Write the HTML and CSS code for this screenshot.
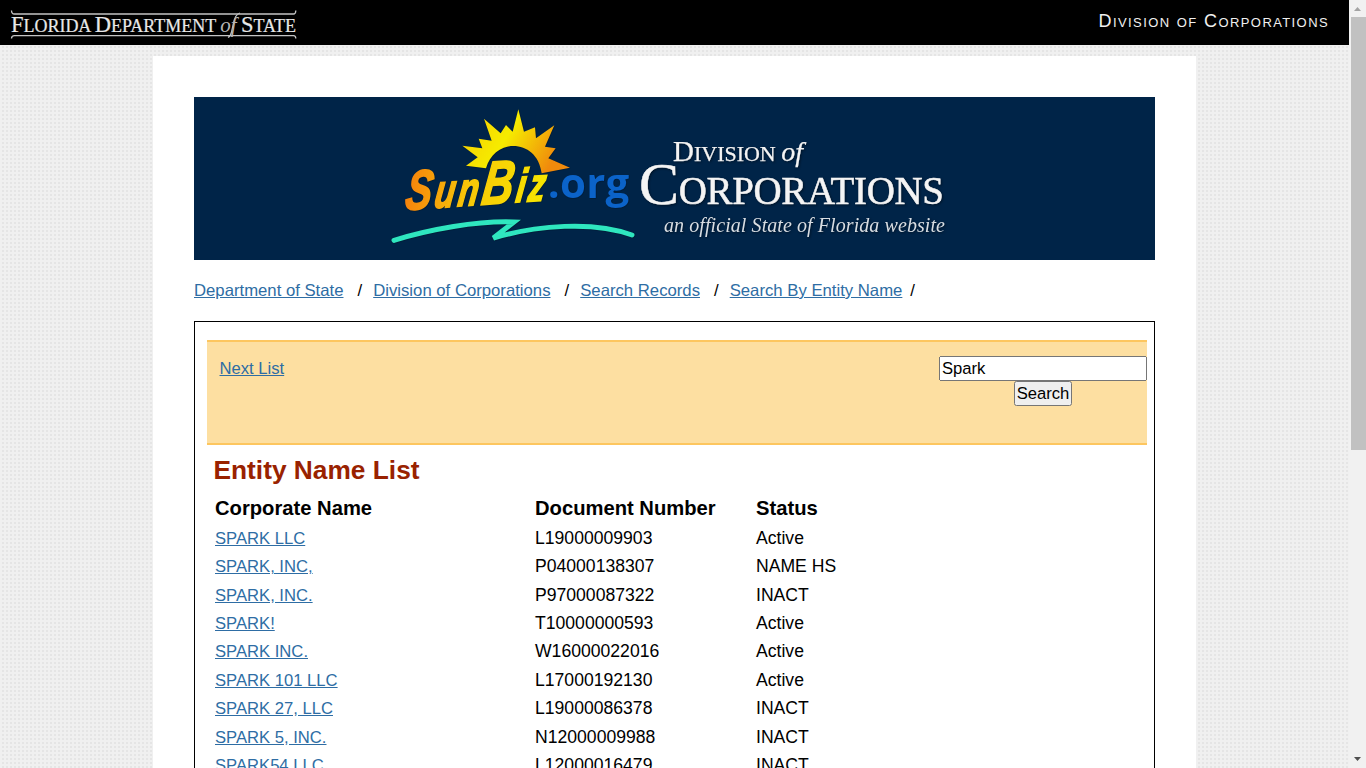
FILE: index.html
```html
<!DOCTYPE html>
<html lang="en">
<head>
<meta charset="utf-8">
<title>Entity Name List</title>
<link rel="stylesheet" href="styles.css">
</head>
<body>
<div class="window">
  <div class="page">
    <header class="topbar">
      <svg class="dos-logo" width="300" height="45" viewBox="0 0 300 45">
        <g class="dos-rule">
          <path d="M11.500 10.500c0 2 1 3.500 3 3.500H293.500c1.500 0 2.300-1.500 2.300-3.500"/>
          <path d="M11.500 38.500c0-1.500 1-2.900 3-2.900H293.500c1.500 0 2.300 1.400 2.300 2.900"/>
        </g>
        <path class="dos-of-flourish" d="M240 13c-4 1-5.500 5-6.500 10l-2 9c-.6 3-1.500 4.500-3.500 5.500"/>
        <text class="dos-text" x="11" y="32" textLength="285"><tspan class="cap">F</tspan>LORIDA <tspan class="cap">D</tspan>EPARTMENT <tspan class="of">of</tspan> <tspan class="cap">S</tspan>TATE</text>
      </svg>
      <div class="division">Division of Corporations</div>
    </header>
    <main class="card">
      <div class="banner">
        <svg width="961" height="163" viewBox="0 0 961 163">
          <defs>
            <linearGradient id="sunfill" x1="0" y1="0" x2="1" y2="0.35">
              <stop offset="0" stop-color="#f7c900"/>
              <stop offset=".5" stop-color="#f6ec00"/>
              <stop offset="1" stop-color="#f08a0c"/>
            </linearGradient>
            <linearGradient id="bizfill" x1="0" y1="0" x2="1" y2="0">
              <stop offset="0" stop-color="#f5830c"/>
              <stop offset=".45" stop-color="#f8c808"/>
              <stop offset="1" stop-color="#f7e600"/>
            </linearGradient>
          </defs>
          <g class="soft" transform="translate(186 3) scale(.33333)">
            <path fill="url(#sunfill)" d="M258 197L293 172L247 137L307 145L296 116L335 122L312 56L362 100L378 75L398 95L415 28L432 95L465 82L468 115L523 76L495 140L527 145L505 175L570 203L485 220C478 165 440 138 400 138C360 138 330 165 318 205Z"/>
            <g transform="translate(72 330) rotate(-4) skewX(-12) scale(1 1.4)">
              <text class="biz" x="0" y="0" textLength="420" fill="url(#bizfill)" stroke="url(#bizfill)"><tspan class="biz-s">S</tspan>un<tspan class="biz-b">B</tspan>iz</text>
            </g>
            <text class="org" x="503" y="293" textLength="245">.org</text>
            <path class="swoosh" d="M42 421C150 388 290 362 402 366L340 414C470 376 640 362 756 405"/>
          </g>
          <g class="soft">
            <text class="cor-a" x="479" y="64" textLength="130"><tspan class="big">D</tspan>IVISION <tspan class="of-i">of</tspan></text>
            <text class="cor-b" x="445" y="107" textLength="305"><tspan class="big">C</tspan>ORPORATIONS</text>
            <text class="cor-c" x="470" y="135" textLength="281">an official State of Florida website</text>
          </g>
        </svg>
      </div>
      <nav class="crumbs">
        <a href="#">Department of State</a><span class="sep">/</span>
        <a href="#">Division of Corporations</a><span class="sep">/</span>
        <a href="#">Search Records</a><span class="sep">/</span>
        <a href="#">Search By Entity Name</a><span class="sep last">/</span>
      </nav>
      <section class="box">
        <div class="band">
          <a class="next" href="#">Next List</a>
          <form class="search">
            <input class="query" type="text" value="Spark">
            <button class="go" type="button">Search</button>
          </form>
        </div>
        <h2 class="title">Entity Name List</h2>
        <table class="list">
          <thead>
            <tr><th>Corporate Name</th><th>Document Number</th><th>Status</th></tr>
          </thead>
          <tbody>
            <tr><td><a href="#">SPARK LLC</a></td><td>L19000009903</td><td>Active</td></tr>
            <tr><td><a href="#">SPARK, INC,</a></td><td>P04000138307</td><td>NAME HS</td></tr>
            <tr><td><a href="#">SPARK, INC.</a></td><td>P97000087322</td><td>INACT</td></tr>
            <tr><td><a href="#">SPARK!</a></td><td>T10000000593</td><td>Active</td></tr>
            <tr><td><a href="#">SPARK INC.</a></td><td>W16000022016</td><td>Active</td></tr>
            <tr><td><a href="#">SPARK 101 LLC</a></td><td>L17000192130</td><td>Active</td></tr>
            <tr><td><a href="#">SPARK 27, LLC</a></td><td>L19000086378</td><td>INACT</td></tr>
            <tr><td><a href="#">SPARK 5, INC.</a></td><td>N12000009988</td><td>INACT</td></tr>
            <tr><td><a href="#">SPARK54 LLC</a></td><td>L12000016479</td><td>INACT</td></tr>
          </tbody>
        </table>
      </section>
    </main>
  </div>
  <div class="scrollbar">
    <svg class="arrow up" width="17" height="17" viewBox="0 0 17 17"><path d="M5 11L8.500 7L12 11Z"/></svg>
    <div class="track"><div class="thumb"></div></div>
    <svg class="arrow" width="17" height="17" viewBox="0 0 17 17"><path d="M5 6L8.500 10L12 6Z"/></svg>
  </div>
</div>
</body>
</html>
```
FILE: styles.css
```css
* { box-sizing: border-box; }
html, body { margin: 0; padding: 0; height: 100%; overflow: hidden; }
body { font-family: "Liberation Sans", Arial, sans-serif; font-size: 16.64px; color: #000; }
a { color: #2e6da4; }

.window { display: flex; height: 768px; overflow: hidden; }
.page {
  flex: 1 1 auto;
  min-width: 0;
  height: 768px;
  overflow: hidden;
  background-color: #e5e5e5;
  background-image:
    linear-gradient(90deg, #f0f0f0 50%, transparent 50%),
    linear-gradient(#f0f0f0 50%, transparent 50%);
  background-size: 4px 4px;
}

.topbar {
  height: 45px;
  background: #000;
  display: flex;
  justify-content: space-between;
  align-items: flex-start;
  padding-right: 20px;
}
.dos-logo { display: block; }
.dos-rule path { fill: none; stroke: #c4c4c4; stroke-width: 1.3; }
.dos-of-flourish { fill: none; stroke: #c4c4c4; stroke-width: 1.2; }
.dos-text { font-family: "Liberation Serif", serif; font-size: 18px; fill: #e8e8e8; stroke: #e8e8e8; stroke-width: .2px; }
.dos-text .cap { font-size: 22.5px; }
.dos-text .of { font-style: italic; font-size: 21px; fill: #b5b5b5; stroke: none; }
.division {
  font-family: "Liberation Sans", Arial, sans-serif;
  font-variant: small-caps;
  font-size: 18px;
  letter-spacing: 1.4px;
  color: #f0f0f0;
  margin-top: 11px;
  line-height: 20px;
}

.card {
  width: 1043px;
  margin: 11px 0 0 153px;
  padding: 41px 41px 0;
  background: #fff;
}
.banner { height: 163px; background: #002448; }
.banner svg { display: block; }
.soft { filter: blur(.3px) drop-shadow(1px 1px 1px rgba(0,0,0,.45)); }
.biz { font-family: "Liberation Sans", sans-serif; font-weight: 700; font-style: italic; font-size: 100px; stroke-width: 4px; }
.biz-s { font-size: 118px; }
.biz-b { font-size: 130px; }
.org { font-family: "Open Sans", sans-serif; font-weight: 700; font-size: 126px; fill: #0b63c9; }
.swoosh { fill: none; stroke: #2fe6bf; stroke-width: 15; stroke-linecap: round; stroke-linejoin: miter; }
.cor-a, .cor-b, .cor-c { font-family: "Liberation Serif", serif; fill: #f4f4f4; }
.cor-a { font-size: 22px; stroke: #f4f4f4; stroke-width: .25px; }
.cor-a .big { font-size: 29px; }
.cor-a .of-i { font-style: italic; font-size: 28px; }
.cor-b { font-size: 39px; stroke: #f4f4f4; stroke-width: .5px; }
.cor-b .big { font-size: 60px; }
.cor-c { font-style: italic; font-size: 20px; fill: #d8dde2; }

.crumbs { margin-top: 21px; height: 20px; line-height: 20px; white-space: nowrap; font-size: 16.72px; }
.sep { margin: 0 6.4px 0 14px; }
.sep.last { margin: 0 0 0 8px; }

.box {
  margin-top: 20px;
  height: 600px;
  border: 1px solid #000;
  padding: 18px 7px 0 12px;
}
.band {
  height: 105px;
  background: #fddfa1;
  border-top: 2px solid #fdc65f;
  border-bottom: 2px solid #fdc65f;
  padding: 14px 0 0 12.5px;
  display: flex;
  justify-content: space-between;
  align-items: flex-start;
}
.next { line-height: 24px; margin-top: 1px; }
.search { width: 208px; display: flex; flex-direction: column; align-items: center; }
.query { width: 208px; height: 25px; font: inherit; padding: 0 1px; margin: 0; }
.go { height: 25px; width: 58px; font: inherit; padding: 0; margin: 0; }

.title {
  margin: 10px 0 0 6.5px;
  font-size: 26.3px;
  line-height: 30px;
  color: #992200;
}
.list { margin: 7px 0 0 8px; border-collapse: collapse; table-layout: fixed; width: 800px; }
.list th:nth-child(1) { width: 320px; }
.list th:nth-child(2) { width: 221px; }
.list th { text-align: left; font-size: 20.2px; height: 32.3px; padding: 0; }
.list td { height: 28.38px; padding: 0; font-size: 17.6px; }
.list td a { font-size: 16.64px; }
.list tr { height: 28.38px; }

.scrollbar { flex: 0 0 17px; height: 768px; background: #f1f1f1; display: flex; flex-direction: column; }
.arrow { flex: 0 0 17px; display: block; }
.arrow path { fill: #505050; }
.arrow.up path { fill: #a3a3a3; }
.track { flex: 1 1 auto; padding-left: 2px; }
.thumb { height: 433px; background: #c1c1c1; }
```
